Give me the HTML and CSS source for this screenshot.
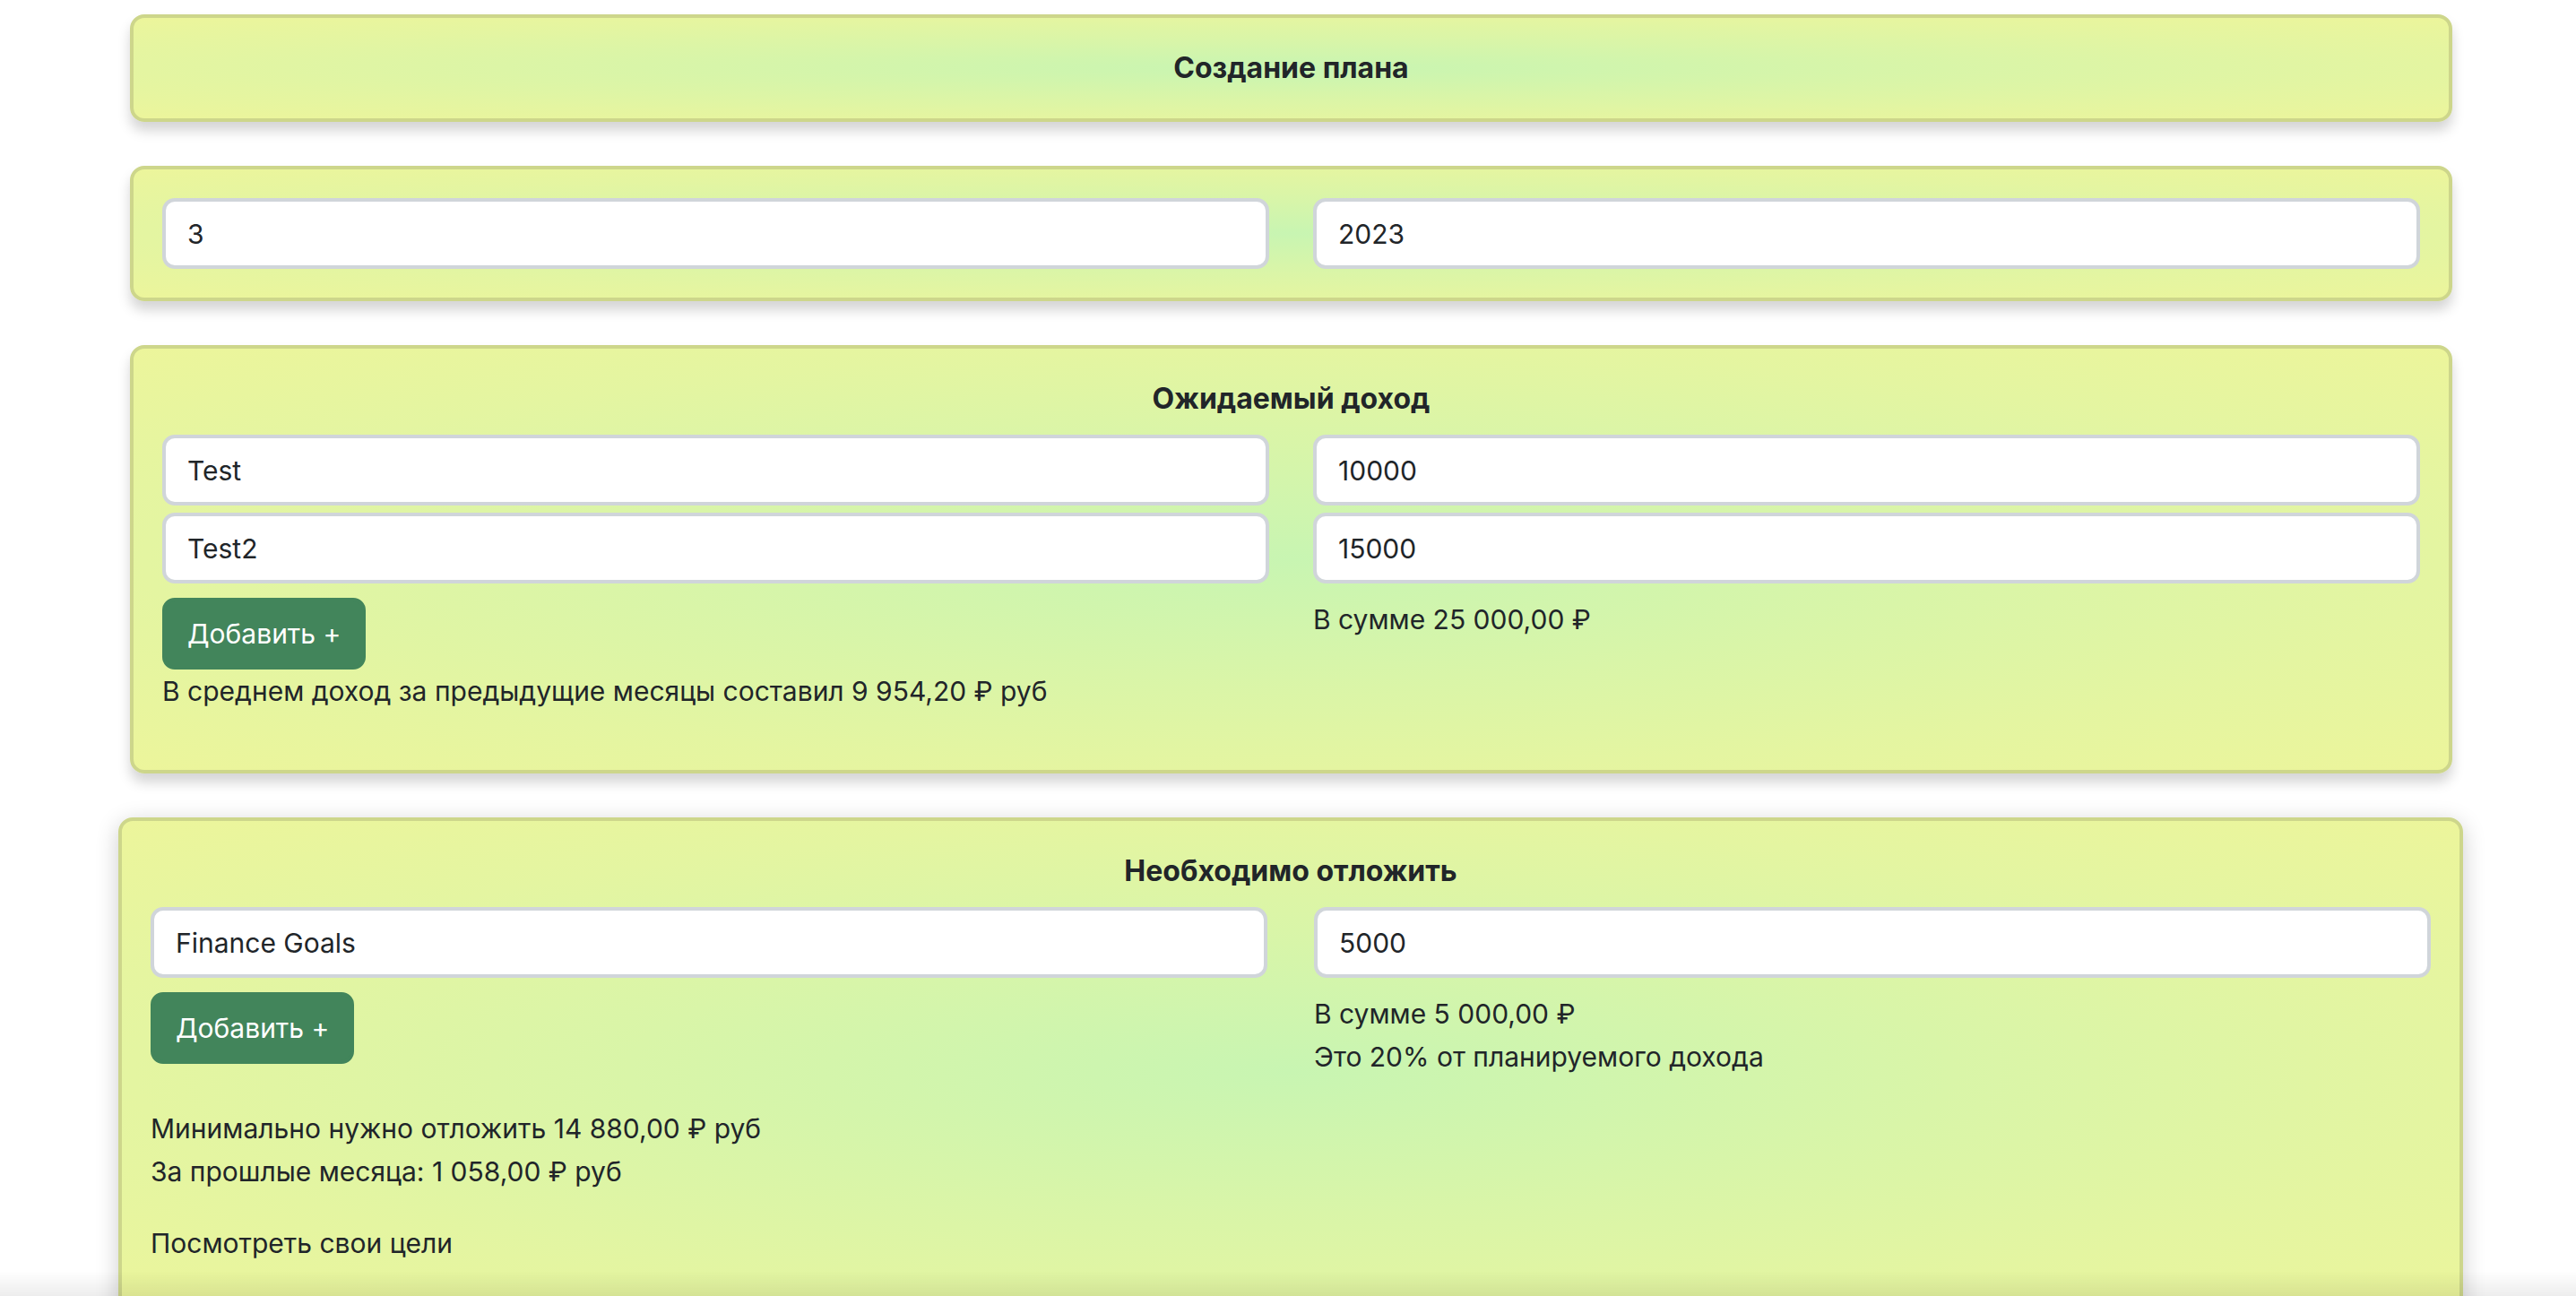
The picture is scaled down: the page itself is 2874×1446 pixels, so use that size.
FILE: index.html
```html
<!DOCTYPE html>
<html lang="ru">
<head>
<meta charset="utf-8">
<title>Создание плана</title>
<link rel="stylesheet" href="styles.css">
</head>
<body>
<main class="page">
  <section class="card card-head">
    <h2 class="card-title">Создание плана</h2>
  </section>

  <section class="card">
    <div class="grid">
      <input class="field" type="text" value="3">
      <input class="field" type="text" value="2023">
    </div>
  </section>

  <section class="card">
    <h2 class="card-title">Ожидаемый доход</h2>
    <div class="grid rows">
      <input class="field" type="text" value="Test">
      <input class="field" type="text" value="10000">
      <input class="field" type="text" value="Test2">
      <input class="field" type="text" value="15000">
    </div>
    <div class="grid after">
      <div>
        <button class="btn" type="button">Добавить +</button>
        <p class="text">В среднем доход за предыдущие месяцы составил 9 954,20 ₽ руб</p>
      </div>
      <div>
        <p class="text flat">В сумме 25 000,00 ₽</p>
      </div>
    </div>
  </section>

  <section class="card card-wide">
    <h2 class="card-title">Необходимо отложить</h2>
    <div class="grid wide">
      <input class="field" type="text" value="Finance Goals">
      <input class="field" type="text" value="5000">
    </div>
    <div class="grid wide after">
      <div>
        <button class="btn" type="button">Добавить +</button>
      </div>
      <div>
        <p class="text flat">В сумме 5 000,00 ₽</p>
        <p class="text">Это 20% от планируемого дохода</p>
      </div>
    </div>
    <p class="text">Минимально нужно отложить 14 880,00 ₽ руб<br>За прошлые месяца: 1 058,00 ₽ руб</p>
    <p class="text"><a class="link" href="#">Посмотреть свои цели</a></p>
  </section>
</main>
<div class="bottom-shade"></div>
</body>
</html>
```

FILE: styles.css
```css
html, body {
  margin: 0;
  background: #ffffff;
}

body {
  font-family: Inter, "Noto Sans", "Liberation Sans", sans-serif;
  color: #212529;
  overflow: hidden;
}

.page {
  padding: 16px 138px 0 145px;
}

.card {
  border: 4px solid #cdd68b;
  border-radius: 16px;
  padding: 32px;
  margin-bottom: 49px;
  background: radial-gradient(ellipse at center, #c8f5b2 0%, #d9f5a8 40%, #e4f5a1 70%, #ecf59b 100%);
  box-shadow: 0 10px 14px rgba(0, 0, 0, 0.17);
}

.card-title {
  margin: 0 0 16px;
  font-size: 32px;
  line-height: 48px;
  font-weight: 700;
  text-align: center;
}

.card-head .card-title {
  margin: 0;
}

.grid {
  display: grid;
  grid-template-columns: 1fr 1fr;
  column-gap: 49px;
}

.grid.rows {
  row-gap: 8px;
}

.grid.after {
  margin-top: 16px;
}

.field {
  display: block;
  width: 100%;
  box-sizing: border-box;
  margin: 0;
  font-family: inherit;
  font-size: 30px;
  line-height: 48px;
  padding: 11.5px 24px;
  border: 4px solid #d0d5da;
  border-radius: 14px;
  background: #ffffff;
  color: #212529;
  outline: none;
}

.btn {
  display: inline-block;
  margin: 0;
  font-family: inherit;
  font-size: 30px;
  line-height: 48px;
  padding: 12px 24px;
  border: 4px solid #42855b;
  border-radius: 14px;
  background: #42855b;
  color: #ffffff;
}

.text {
  margin: 0 0 32px;
  font-size: 30px;
  line-height: 48px;
}

.text.flat {
  margin: 0;
}

.link {
  color: #212529;
  text-decoration: none;
}

/* Fourth card: slightly wider, hovered state */
.card-wide {
  margin: 0 -12px 0 -13px;
  box-shadow: 0 6px 26px rgba(0, 0, 0, 0.2);
}

.grid.wide {
  column-gap: 52px;
}

.bottom-shade {
  position: fixed;
  left: 0;
  right: 0;
  bottom: 0;
  height: 28px;
  background: linear-gradient(to bottom, rgba(0, 0, 0, 0), rgba(0, 0, 0, 0.07));
  pointer-events: none;
}
```
